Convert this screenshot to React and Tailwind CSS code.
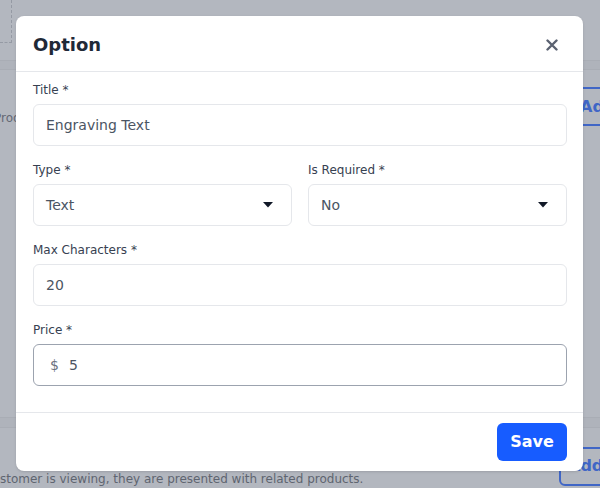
import React from 'react';

const font = "font-['DejaVu_Sans',sans-serif]";

// Small filled caret used in the selects
function Caret() {
  return (
    <svg width="10" height="6" viewBox="0 0 10 6" className="shrink-0">
      <path d="M0 0 L10 0 L5 5.5 Z" fill="#111827" />
    </svg>
  );
}

function CloseIcon() {
  return (
    <svg width="12" height="12" viewBox="0 0 12 12">
      <path d="M1.5 1.5 L10.5 10.5 M10.5 1.5 L1.5 10.5" stroke="#5b6271" strokeWidth="2.4" strokeLinecap="round" />
    </svg>
  );
}

function Field({ label, children }) {
  return (
    <div className="flex flex-col">
      <label className="text-[12px] leading-4 text-[#374151] mb-[6px]">{label}</label>
      {children}
    </div>
  );
}

function TextInput({ value }) {
  return (
    <div className="h-[42px] flex items-center px-[12px] border border-[#e5e7eb] rounded-md text-[14px] text-[#4b5563]">
      {value}
    </div>
  );
}

function SelectBox({ value }) {
  return (
    <div className="h-[42px] flex items-center justify-between pl-[12px] pr-[18px] border border-[#e5e7eb] rounded-md text-[14px] text-[#4b5563]">
      <span>{value}</span>
      <Caret />
    </div>
  );
}

export default function App() {
  return (
    <div className={`relative w-[600px] h-[488px] overflow-hidden bg-[#b3b7bf] ${font}`}>
      {/* Page behind the overlay */}
      <div className="flex flex-col">
        <div className="h-[43px] w-[12px] border-r border-b border-dashed border-[#959aa4]" />
        <div className="mt-[17px] h-[10px] border-y border-[#a9adb5] bg-[#afb3bb]" />
        <div className="mt-[17px] h-[39px] flex justify-between items-start">
          <span className="mt-[23px] -ml-[6px] text-[12px] leading-4 text-[#636874]">Produ</span>
          <div className="h-[39px] w-[40px] -mr-[10px] flex items-center pl-[8px] border-2 border-[#4066c6] rounded-md text-[16px] font-bold text-[#4066c6]">
            Ad
          </div>
        </div>
        <div className="mt-[291px] h-[11px] border-y border-[#a9adb5] bg-[#afb3bb]" />
        <div className="mt-[19px] flex justify-between items-end">
          <span className="-mb-[1px] text-[12px] leading-4 text-[#5f6570] whitespace-nowrap">stomer is viewing, they are presented with related products.</span>
          <div className="h-[39px] w-[56px] -mr-[15px] flex items-center pl-[7px] pb-[2px] border-2 border-[#4066c6] rounded-md text-[16px] font-bold text-[#4066c6]">
            Add
          </div>
        </div>
      </div>

      {/* Modal */}
      <div className="absolute left-[16px] top-[16px] w-[567px] h-[455px] bg-white rounded-lg shadow-sm flex flex-col">
        <div className="h-[56px] flex items-center justify-between pt-[2px] pl-[17px] pr-[25px] border-b border-[#e5e7eb]">
          <h2 className="text-[18px] font-bold text-[#1f2937]">Option</h2>
          <CloseIcon />
        </div>

        <div className="flex-1 flex flex-col gap-[16px] pl-[17px] pr-[16px] pt-[10px]">
          <Field label="Title *">
            <TextInput value="Engraving Text" />
          </Field>
          <div className="grid grid-cols-2 gap-[16px]">
            <Field label="Type *">
              <SelectBox value="Text" />
            </Field>
            <Field label="Is Required *">
              <SelectBox value="No" />
            </Field>
          </div>
          <Field label="Max Characters *">
            <TextInput value="20" />
          </Field>
          <Field label="Price *">
            <div className="h-[42px] flex items-center gap-[10px] pl-[16px] border border-[#9ca3af] rounded-md text-[14px]">
              <span className="text-[#6b7280]">$</span>
              <span className="text-[#4b5563]">5</span>
            </div>
          </Field>
        </div>

        <div className="h-[59px] flex items-center justify-end pr-[16px] border-t border-[#e5e7eb]">
          <button className="h-[38px] w-[70px] rounded-md bg-[#175cff] text-white text-[16px] font-bold">
            Save
          </button>
        </div>
      </div>
    </div>
  );
}
